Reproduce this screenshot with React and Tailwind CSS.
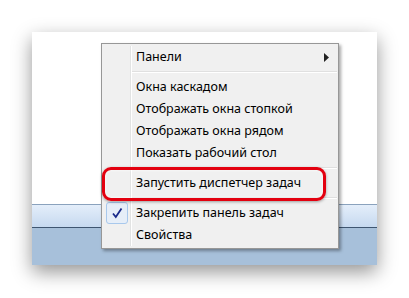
import React from "react";

const font = { fontFamily: '"Noto Sans", "Open Sans", sans-serif' };

const Item = ({ children, arrow, checked }) => (
  <div className="relative flex h-[22px] items-center">
    <div className="flex w-[29px] items-center justify-center">
      {checked && (
        <div className="flex h-[22px] w-[22px] items-center justify-center rounded-[3px] border border-[#a8c8ec] bg-[#e6eef8]">
          <svg width="12" height="12" viewBox="0 0 12 12">
            <path d="M2 6.5 L4.8 10 L10.5 1.5" fill="none" stroke="#1a2a8a" strokeWidth="1.8" />
          </svg>
        </div>
      )}
    </div>
    <div className="ml-[5px] flex-1 text-[12.5px] text-black">{children}</div>
    {arrow && (
      <svg className="mr-[9px]" width="5" height="9" viewBox="0 0 5 9">
        <path d="M0 0 L5 4.5 L0 9 Z" fill="#222" />
      </svg>
    )}
  </div>
);

const Sep = () => (
  <div className="flex h-[8px] items-center pl-[30px] pr-[1px]">
    <div className="w-full border-t border-b border-t-[#e0e0e0] border-b-white" />
  </div>
);

export default function App() {
  return (
    <div className="h-[298px] w-[409px] overflow-hidden bg-white pl-[32px] pt-[32px]" style={font}>
      <div className="relative flex h-[233px] w-[345px] flex-col bg-white shadow-[0_7px_18px_rgba(0,0,0,0.42)]">
        <div className="h-[172px] bg-white" />
        <div className="flex h-[61px] flex-col">
          <div className="h-[1px] bg-[#8aa2bd]" />
          <div className="h-[22px] bg-gradient-to-b from-[#e4eefa] to-[#c6d9ef]" />
          <div className="h-[1px] bg-[#3e5570]" />
          <div className="flex-1 bg-[#a7c0da]" />
        </div>

        <div className="absolute left-[69px] top-[11px] w-[238px] border border-[#979797] bg-[#f0f0f0] py-[2px] shadow-[2px_2px_3px_rgba(0,0,0,0.35)]">
          <div className="absolute bottom-[2px] left-[28px] top-[2px] w-[2px] border-l border-r border-l-[#e2e3e3] border-r-white" />
          <Item arrow>Панели</Item>
          <Sep />
          <Item>Окна каскадом</Item>
          <Item>Отображать окна стопкой</Item>
          <Item>Отображать окна рядом</Item>
          <Item>Показать рабочий стол</Item>
          <Sep />
          <Item>Запустить диспетчер задач</Item>
          <Sep />
          <Item checked>Закрепить панель задач</Item>
          <Item>Свойства</Item>

          <div className="absolute left-[0px] top-[123px] h-[34px] w-[224px] rounded-[9px] border-[3px] border-[#e3000f] shadow-[0_1px_3px_rgba(0,0,0,0.35),inset_0_0_3px_rgba(255,255,255,0.9)]" />
        </div>
      </div>
    </div>
  );
}
